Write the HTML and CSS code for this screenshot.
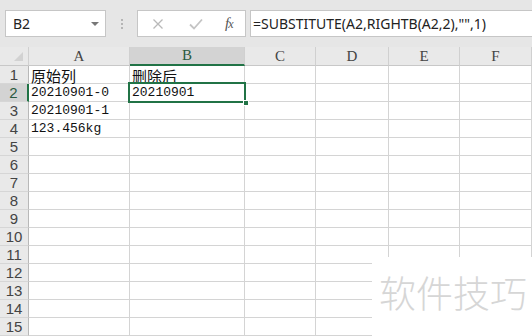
FILE: index.html
```html
<!DOCTYPE html>
<html>
<head>
<meta charset="utf-8">
<link rel="stylesheet" href="styles.css">
</head>
<body>
<div class="app">
  <div class="toolbar">
    <div class="namebox"><span>B2</span><span class="caret"></span></div>
    <div class="dots"><i></i><i></i><i></i></div>
    <div class="funcbox">
      <svg class="ic" width="12" height="12" viewBox="0 0 12 12"><path d="M1.5 1.5 L10.5 10.5 M10.5 1.5 L1.5 10.5" stroke="#b9b9b9" stroke-width="1.3" fill="none"/></svg>
      <svg class="ic" width="14" height="12" viewBox="0 0 14 12"><path d="M1 6.5 L5 10.5 L13 1.5" stroke="#c4c4c4" stroke-width="1.8" fill="none"/></svg>
      <span class="fx">f<span class="x">x</span></span>
    </div>
    <div class="formula">=SUBSTITUTE(A2,RIGHTB(A2,2),"",1)</div>
  </div>
  <div class="sheet">
    <div class="corner"><span class="tri"></span></div>
    <div class="ch">A</div>
    <div class="ch sel">B</div>
    <div class="ch">C</div>
    <div class="ch">D</div>
    <div class="ch">E</div>
    <div class="ch">F</div>

    <div class="rh">1</div><div class="c cjk">原始列</div><div class="c cjk">删除后</div><div class="c"></div><div class="c"></div><div class="c"></div><div class="c"></div>
    <div class="rh sel">2</div><div class="c">20210901-0</div><div class="c">20210901</div><div class="c"></div><div class="c"></div><div class="c"></div><div class="c"></div>
    <div class="rh">3</div><div class="c">20210901-1</div><div class="c"></div><div class="c"></div><div class="c"></div><div class="c"></div><div class="c"></div>
    <div class="rh">4</div><div class="c">123.456kg</div><div class="c"></div><div class="c"></div><div class="c"></div><div class="c"></div><div class="c"></div>
    <div class="rh">5</div><div class="c"></div><div class="c"></div><div class="c"></div><div class="c"></div><div class="c"></div><div class="c"></div>
    <div class="rh">6</div><div class="c"></div><div class="c"></div><div class="c"></div><div class="c"></div><div class="c"></div><div class="c"></div>
    <div class="rh">7</div><div class="c"></div><div class="c"></div><div class="c"></div><div class="c"></div><div class="c"></div><div class="c"></div>
    <div class="rh">8</div><div class="c"></div><div class="c"></div><div class="c"></div><div class="c"></div><div class="c"></div><div class="c"></div>
    <div class="rh">9</div><div class="c"></div><div class="c"></div><div class="c"></div><div class="c"></div><div class="c"></div><div class="c"></div>
    <div class="rh">10</div><div class="c"></div><div class="c"></div><div class="c"></div><div class="c"></div><div class="c"></div><div class="c"></div>
    <div class="rh">11</div><div class="c"></div><div class="c"></div><div class="c"></div><div class="c"></div><div class="c"></div><div class="c"></div>
    <div class="rh">12</div><div class="c"></div><div class="c"></div><div class="c"></div><div class="c"></div><div class="c"></div><div class="c"></div>
    <div class="rh">13</div><div class="c"></div><div class="c"></div><div class="c"></div><div class="c"></div><div class="c"></div><div class="c"></div>
    <div class="rh">14</div><div class="c"></div><div class="c"></div><div class="c"></div><div class="c"></div><div class="c"></div><div class="c"></div>
    <div class="rh">15</div><div class="c"></div><div class="c"></div><div class="c"></div><div class="c"></div><div class="c"></div><div class="c"></div>

    <div class="selection"><span class="handle"></span></div>
    <div class="watermark">软件技巧</div>
  </div>
</div>
</body>
</html>
```
FILE: styles.css
```css
* { box-sizing: border-box; }
html, body { margin: 0; padding: 0; }
body { width: 532px; height: 336px; overflow: hidden; background: #fff; }
.app { width: 532px; height: 336px; display: flex; flex-direction: column; }

.toolbar {
  height: 47px;
  background: #e6e6e6;
  display: flex;
  align-items: flex-start;
  padding: 10px 0 0 5px;
  font-family: "Noto Sans", "Liberation Sans", sans-serif;
}
.namebox {
  width: 101px; height: 27px;
  background: #fff;
  border: 1px solid #c6c6c6;
  display: flex; align-items: center; justify-content: space-between;
  padding: 0 6px 0 7px;
  font-size: 14px; color: #222;
}
.caret {
  width: 0; height: 0;
  border-left: 4px solid transparent;
  border-right: 4px solid transparent;
  border-top: 4px solid #777;
}
.dots {
  width: 31px; height: 27px;
  display: flex; flex-direction: column; align-items: center; justify-content: center; gap: 2px;
}
.dots i { display: block; width: 2px; height: 2px; background: #b5b5b5; }
.funcbox {
  width: 109px; height: 27px;
  background: #fff;
  border: 1px solid #c6c6c6;
  display: flex; align-items: center;
  padding: 0 0 0 14px;
}
.funcbox .ic:first-child { margin-right: 25px; }
.funcbox .ic:nth-child(2) { margin-right: 22px; }
.fx {
  font-family: "Liberation Serif", serif;
  font-style: italic;
  font-size: 15px;
  color: #555;
  letter-spacing: -1px;
}
.fx .x { font-size: 12px; }
.formula {
  margin-left: 4px;
  flex: 1;
  height: 27px;
  background: #fff;
  border: 1px solid #c6c6c6;
  border-right: none;
  padding: 0 0 0 2px;
  font-size: 14px;
  line-height: 25px;
  color: #222;
  white-space: nowrap;
  overflow: hidden;
}

.sheet {
  position: relative;
  display: grid;
  grid-template-columns: 29px 101px 115px 71px 73px 71px 72px;
  grid-template-rows: 19px repeat(15, 18px);
  font-family: "Liberation Mono", "Noto Sans CJK SC", monospace;
}
.corner, .ch, .rh {
  background: #e9e9e9;
  border-right: 1px solid #d0d0d0;
  border-bottom: 1px solid #c8c8c8;
  color: #444;
}
.corner { position: relative; }
.tri {
  position: absolute; right: 5px; bottom: 4px;
  width: 0; height: 0;
  border-left: 9px solid transparent;
  border-bottom: 9px solid #d2d2d2;
}
.ch {
  display: flex; justify-content: center; align-items: flex-end;
  font-family: "Liberation Serif", serif;
  font-size: 15px; line-height: 18px;
}
.ch.sel { background: #d3d3d3; border-bottom: 2px solid #217346; color: #2b5a40; }
.rh {
  display: flex; justify-content: center; align-items: center;
  font-family: "Liberation Sans", sans-serif;
  font-size: 15px; color: #444;
  border-bottom-color: #d6d6d6;
  border-right: 1px solid #b8b8b8;
}
.rh.sel { background: #d3d3d3; border-right: 2px solid #217346; color: #2b5a40; }
.c {
  border-right: 1px solid #d4d4d4;
  border-bottom: 1px solid #d4d4d4;
  font-size: 13px;
  line-height: 17px;
  padding-left: 2px;
  color: #111;
  white-space: nowrap;
  font-family: "Liberation Mono", "Noto Sans CJK SC", monospace;
}
.c.cjk {
  font-family: "Noto Sans CJK SC", sans-serif;
  font-size: 15px;
  line-height: 18px;
  padding-top: 1px;
}

.selection {
  position: absolute;
  left: 128px; top: 35px;
  width: 118px; height: 21px;
  border: 2px solid #217346;
  pointer-events: none;
}
.handle {
  position: absolute; right: -5px; bottom: -5px;
  width: 6px; height: 6px;
  background: #217346;
  border: 1px solid #fff;
}
.watermark {
  position: absolute;
  left: 372px; top: 210px; right: 0; bottom: 0;
  background: #fff;
  font-family: "Noto Sans CJK SC", sans-serif;
  font-weight: 300;
  font-size: 37px;
  color: #d6d6d6;
  padding: 12px 0 0 7px;
  line-height: 46px;
  white-space: nowrap;
}
```
